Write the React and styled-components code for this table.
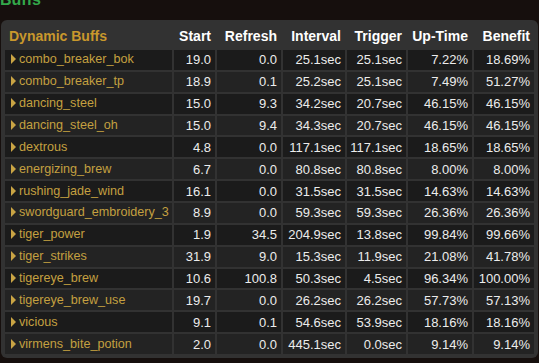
import styled, { createGlobalStyle } from "styled-components";

const GlobalStyle = createGlobalStyle`
  html, body {
    margin: 0;
    padding: 0;
    background: #160f0d;
    font-family: "Liberation Sans", Arial, sans-serif;
    overflow: hidden;
  }
`;

const columns = [
  { key: "name", label: "Dynamic Buffs", width: 167 },
  { key: "start", label: "Start", width: 41 },
  { key: "refresh", label: "Refresh", width: 64 },
  { key: "interval", label: "Interval", width: 62 },
  { key: "trigger", label: "Trigger", width: 59 },
  { key: "uptime", label: "Up-Time", width: 64 },
  { key: "benefit", label: "Benefit", width: 60 },
];

const buffs = [
  ["combo_breaker_bok", "19.0", "0.0", "25.1sec", "25.1sec", "7.22%", "18.69%"],
  ["combo_breaker_tp", "18.9", "0.1", "25.2sec", "25.1sec", "7.49%", "51.27%"],
  ["dancing_steel", "15.0", "9.3", "34.2sec", "20.7sec", "46.15%", "46.15%"],
  ["dancing_steel_oh", "15.0", "9.4", "34.3sec", "20.7sec", "46.15%", "46.15%"],
  ["dextrous", "4.8", "0.0", "117.1sec", "117.1sec", "18.65%", "18.65%"],
  ["energizing_brew", "6.7", "0.0", "80.8sec", "80.8sec", "8.00%", "8.00%"],
  ["rushing_jade_wind", "16.1", "0.0", "31.5sec", "31.5sec", "14.63%", "14.63%"],
  ["swordguard_embroidery_3", "8.9", "0.0", "59.3sec", "59.3sec", "26.36%", "26.36%"],
  ["tiger_power", "1.9", "34.5", "204.9sec", "13.8sec", "99.84%", "99.66%"],
  ["tiger_strikes", "31.9", "9.0", "15.3sec", "11.9sec", "21.08%", "41.78%"],
  ["tigereye_brew", "10.6", "100.8", "50.3sec", "4.5sec", "96.34%", "100.00%"],
  ["tigereye_brew_use", "19.7", "0.0", "26.2sec", "26.2sec", "57.73%", "57.13%"],
  ["vicious", "9.1", "0.1", "54.6sec", "53.9sec", "18.16%", "18.16%"],
  ["virmens_bite_potion", "2.0", "0.0", "445.1sec", "0.0sec", "9.14%", "9.14%"],
];

const App = () => {
  return (
    <Page>
      <GlobalStyle />
      <Title>Buffs</Title>
      <Panel>
        <BuffTable>
          <thead>
            <tr>
              {columns.map((col, index) => (
                <Th key={col.key} $w={col.width} $left={index === 0}>
                  {col.label}
                </Th>
              ))}
            </tr>
          </thead>
          <tbody>
            {buffs.map((row, index) => (
              <Row key={row[0]} $odd={index % 2 === 0}>
                <NameCell>
                  <Arrow />
                  {row[0]}
                </NameCell>
                {row.slice(1).map((value, i) => (
                  <Td key={i}>{value}</Td>
                ))}
              </Row>
            ))}
          </tbody>
        </BuffTable>
      </Panel>
    </Page>
  );
};

export default App;

const Page = styled.div`
  width: 539px;
  height: 363px;
  overflow: hidden;
`;

// heading sits mostly above the top edge, as in the scrolled view
const Title = styled.h3`
  margin: -8px 0 12px 0;
  font-size: 16px;
  line-height: 16px;
  font-weight: bold;
  color: #33a84a;
`;

const Panel = styled.div`
  margin-left: 1px;
  width: 537px;
  box-sizing: border-box;
  padding: 2px;
  background: #323232;
  border-radius: 6px;
`;

const BuffTable = styled.table`
  table-layout: fixed;
  width: 533px;
  border-collapse: separate;
  border-spacing: 2px;
  font-size: 13px;
`;

const Th = styled.th`
  box-sizing: border-box;
  width: ${(p) => p.$w}px;
  height: 24px;
  padding: 0 ${(p) => (p.$left ? "0 0 4px" : "4px 0 0")};
  text-align: ${(p) => (p.$left ? "left" : "right")};
  font-size: 14px;
  font-weight: bold;
  color: ${(p) => (p.$left ? "#c9982c" : "#ffffff")};
  white-space: nowrap;
`;

const Row = styled.tr`
  background: ${(p) => (p.$odd ? "#1b1b1b" : "#232323")};
`;

const Td = styled.td`
  box-sizing: border-box;
  height: 19.86px;
  padding: 0 4px 0 0;
  text-align: right;
  color: #ececec;
  white-space: nowrap;
  line-height: 15px;
`;

const NameCell = styled.td`
  box-sizing: border-box;
  height: 19.86px;
  padding: 0 0 0 6px;
  font-size: 12.6px;
  color: #c4a040;
  white-space: nowrap;
  line-height: 15px;
`;

const Arrow = styled.span`
  display: inline-block;
  width: 0;
  height: 0;
  margin-right: 3px;
  vertical-align: -1px;
  border-top: 5px solid transparent;
  border-bottom: 5px solid transparent;
  border-left: 5px solid #c9a444;
`;
